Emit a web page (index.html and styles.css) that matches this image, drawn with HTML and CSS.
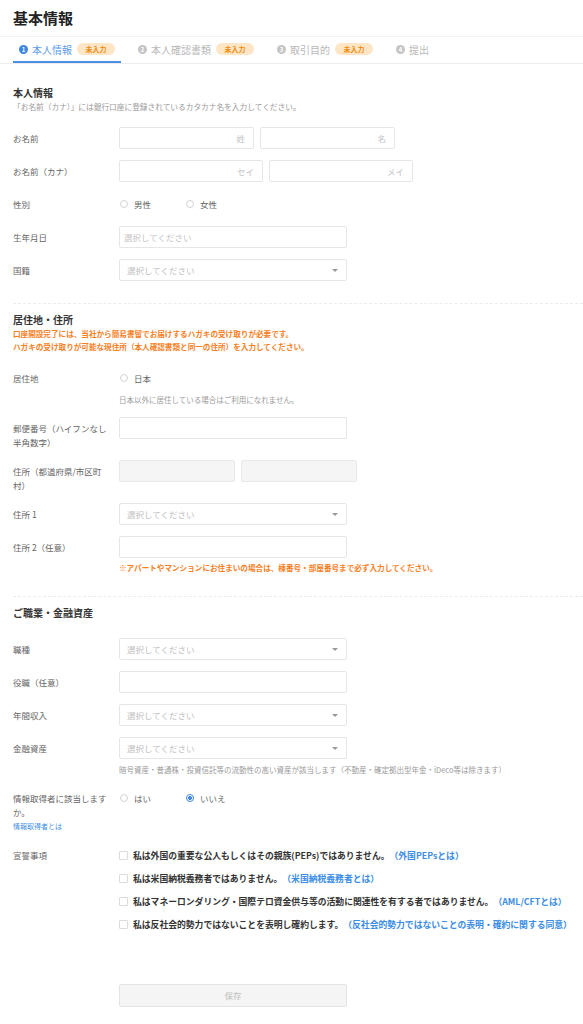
FILE: index.html
```html
<!DOCTYPE html>
<html lang="ja">
<head>
    <meta charset="UTF-8">
    <meta name="viewport" content="width=device-width, initial-scale=1.0">
    <title>基本情報</title>
    <link rel="stylesheet" href="styles.css">
</head>
<body>
    <div class="page">
        <h1 class="page-title">基本情報</h1>

        <div class="steps">
            <div class="step active">
                <span class="step-num">1</span>
                <span class="step-name">本人情報</span>
                <span class="badge">未入力</span>
            </div>
            <div class="step">
                <span class="step-num">2</span>
                <span class="step-name">本人確認書類</span>
                <span class="badge">未入力</span>
            </div>
            <div class="step">
                <span class="step-num">3</span>
                <span class="step-name">取引目的</span>
                <span class="badge">未入力</span>
            </div>
            <div class="step">
                <span class="step-num">4</span>
                <span class="step-name">提出</span>
            </div>
        </div>

        <!-- 本人情報 -->
        <section class="section">
            <div class="section-head">
                <h2>本人情報</h2>
                <p class="section-note">「お名前（カナ）」には銀行口座に登録されているカタカナ名を入力してください。</p>
            </div>

            <div class="form-row">
                <label class="form-label">お名前</label>
                <div class="form-control">
                    <div class="pair">
                        <input type="text" class="input input-name" placeholder="姓">
                        <input type="text" class="input input-name" placeholder="名">
                    </div>
                </div>
            </div>
            <div class="form-row">
                <label class="form-label">お名前（カナ）</label>
                <div class="form-control">
                    <div class="pair">
                        <input type="text" class="input input-kana" placeholder="セイ">
                        <input type="text" class="input input-kana" placeholder="メイ">
                    </div>
                </div>
            </div>
            <div class="form-row">
                <label class="form-label">性別</label>
                <div class="form-control">
                    <div class="radio-group">
                        <span class="radio"><span class="radio-mark"></span>男性</span>
                        <span class="radio"><span class="radio-mark"></span>女性</span>
                    </div>
                </div>
            </div>
            <div class="form-row">
                <label class="form-label">生年月日</label>
                <div class="form-control">
                    <input type="text" class="input input-wide input-date" placeholder="選択してください">
                </div>
            </div>
            <div class="form-row">
                <label class="form-label">国籍</label>
                <div class="form-control">
                    <div class="select">選択してください<span class="caret"></span></div>
                </div>
            </div>
        </section>

        <!-- 居住地・住所 -->
        <section class="section">
            <div class="section-head">
                <h2>居住地・住所</h2>
                <p class="warn">口座開設完了には、当社から簡易書留でお届けするハガキの受け取りが必要です。<br>ハガキの受け取りが可能な現住所（本人確認書類と同一の住所）を入力してください。</p>
            </div>

            <div class="form-row">
                <label class="form-label">居住地</label>
                <div class="form-control">
                    <div class="radio-group">
                        <span class="radio"><span class="radio-mark"></span>日本</span>
                    </div>
                    <p class="hint">日本以外に居住している場合はご利用になれません。</p>
                </div>
            </div>
            <div class="form-row">
                <label class="form-label">郵便番号（ハイフンなし半角数字）</label>
                <div class="form-control">
                    <input type="text" class="input input-wide">
                </div>
            </div>
            <div class="form-row">
                <label class="form-label">住所（都道府県/市区町村）</label>
                <div class="form-control">
                    <div class="pair">
                        <input type="text" class="input input-half" disabled>
                        <input type="text" class="input input-half" disabled>
                    </div>
                </div>
            </div>
            <div class="form-row">
                <label class="form-label">住所 1</label>
                <div class="form-control">
                    <div class="select">選択してください<span class="caret"></span></div>
                </div>
            </div>
            <div class="form-row">
                <label class="form-label">住所 2（任意）</label>
                <div class="form-control">
                    <input type="text" class="input input-wide">
                    <p class="warn warn-field">※アパートやマンションにお住まいの場合は、棟番号・部屋番号まで必ず入力してください。</p>
                </div>
            </div>
        </section>

        <!-- ご職業・金融資産 -->
        <section class="section">
            <div class="section-head section-head-plain">
                <h2>ご職業・金融資産</h2>
            </div>

            <div class="form-row">
                <label class="form-label">職種</label>
                <div class="form-control">
                    <div class="select">選択してください<span class="caret"></span></div>
                </div>
            </div>
            <div class="form-row">
                <label class="form-label">役職（任意）</label>
                <div class="form-control">
                    <input type="text" class="input input-wide">
                </div>
            </div>
            <div class="form-row">
                <label class="form-label">年間収入</label>
                <div class="form-control">
                    <div class="select">選択してください<span class="caret"></span></div>
                </div>
            </div>
            <div class="form-row">
                <label class="form-label">金融資産</label>
                <div class="form-control">
                    <div class="select">選択してください<span class="caret"></span></div>
                    <p class="hint">暗号資産・普通株・投資信託等の流動性の高い資産が該当します（不動産・確定拠出型年金・iDeco等は除きます）</p>
                </div>
            </div>
            <div class="form-row">
                <label class="form-label">情報取得者に該当しますか。<a class="label-link" href="#">情報取得者とは</a></label>
                <div class="form-control">
                    <div class="radio-group">
                        <span class="radio"><span class="radio-mark"></span>はい</span>
                        <span class="radio checked"><span class="radio-mark"></span>いいえ</span>
                    </div>
                </div>
            </div>
            <div class="form-row">
                <label class="form-label">宣誓事項</label>
                <div class="form-control">
                    <div class="check-list">
                        <div class="check"><span class="check-box"></span>私は外国の重要な公人もしくはその親族(PEPs)ではありません。<a href="#">（外国PEPsとは）</a></div>
                        <div class="check"><span class="check-box"></span>私は米国納税義務者ではありません。<a href="#">（米国納税義務者とは）</a></div>
                        <div class="check"><span class="check-box"></span>私はマネーロンダリング・国際テロ資金供与等の活動に関連性を有する者ではありません。<a href="#">（AML/CFTとは）</a></div>
                        <div class="check"><span class="check-box"></span>私は反社会的勢力ではないことを表明し確約します。<a href="#">（反社会的勢力ではないことの表明・確約に関する同意）</a></div>
                    </div>
                </div>
            </div>

            <div class="actions">
                <button class="save" disabled>保存</button>
            </div>
        </section>
    </div>
</body>
</html>
```

FILE: styles.css
```css
body {
    margin: 0;
    background-color: white;
    font-family: "Noto Sans CJK JP", "Noto Sans", sans-serif;
    color: #333;
}

.page {
    padding: 8px 0 0 13px;
}

.page-title {
    margin: 0 0 8px;
    font-size: 15px;
    line-height: 20px;
    font-weight: bold;
    color: #222;
}

/* steps */

.steps {
    display: flex;
    gap: 11px;
    border-top: 1px solid #f2f2f2;
    border-bottom: 1px solid #ececec;
    margin-left: -13px;
    padding-left: 13px;
}

.step {
    display: flex;
    align-items: center;
    height: 24px;
    padding: 0 6px;
    border-bottom: 2px solid transparent;
    font-size: 10px;
    color: #b8b8b8;
}

.step.active {
    border-bottom-color: #4a8fe6;
    color: #5d9ce8;
}

.step-num {
    width: 9px;
    height: 9px;
    border-radius: 50%;
    background-color: #c4c4c4;
    color: white;
    font-size: 6px;
    font-weight: bold;
    line-height: 9px;
    text-align: center;
    margin-right: 4px;
}

.step.active .step-num {
    background-color: #3d86e3;
}

.badge {
    margin-left: 5px;
    padding: 0 8.5px;
    height: 12px;
    line-height: 12px;
    border-radius: 6px;
    background-color: #fde6c6;
    color: #f08a0c;
    font-size: 7px;
    font-weight: bold;
}

/* sections */

.section {
    padding: 9px 0 11px;
    border-top: 1px dashed #ececec;
}

.steps + .section {
    border-top: none;
    padding-top: 22px;
}

.section-head {
    margin-bottom: 14px;
}

.section-head-plain {
    margin-bottom: 18px;
}

h2 {
    margin: 0;
    font-size: 10px;
    line-height: 14px;
    font-weight: bold;
    color: #333;
}

.section-note {
    margin: 1px 0 0;
    font-size: 7.7px;
    line-height: 12px;
    color: #999;
}

.warn {
    margin: 0;
    font-size: 7.6px;
    line-height: 13px;
    font-weight: bold;
    color: #f7801e;
}

.warn-field {
    margin-top: 4px;
    line-height: 12px;
}

/* form rows */

.form-row {
    display: flex;
    margin-bottom: 11px;
}

.form-label {
    width: 96px;
    flex-shrink: 0;
    padding: 4px 10px 0 0;
    font-size: 8.5px;
    line-height: 14px;
    color: #666;
}

.label-link {
    display: block;
    font-size: 7px;
    color: #3b8de6;
    text-decoration: none;
}

.form-control {
    flex: 1;
}

.pair {
    display: flex;
    gap: 6px;
}

.input {
    height: 22px;
    box-sizing: border-box;
    border: 1px solid #e6e6e6;
    border-radius: 2px;
    padding: 0 8px;
    font-family: inherit;
    font-size: 8.5px;
    color: #333;
    background-color: white;
    margin: 0;
}

.input::placeholder {
    color: #c4c4c4;
}

.input-name {
    width: 135px;
    text-align: right;
}

.input-kana {
    width: 144px;
    text-align: right;
}

.input-wide {
    width: 228px;
    display: block;
}

.input-date {
    padding-left: 4px;
}

.input-half {
    width: 116px;
    background-color: #f5f5f5;
    border-color: #e8e8e8;
}

.select {
    position: relative;
    width: 228px;
    height: 22px;
    box-sizing: border-box;
    border: 1px solid #e6e6e6;
    border-radius: 2px;
    padding-left: 7px;
    font-size: 8.5px;
    line-height: 20px;
    color: #c0c0c0;
}

.caret {
    position: absolute;
    right: 8px;
    top: 9px;
    border-left: 3px solid transparent;
    border-right: 3px solid transparent;
    border-top: 3px solid #999;
}

.hint {
    margin: 5px 0 0;
    font-size: 7.5px;
    line-height: 12px;
    color: #9a9a9a;
}

/* radios and checkboxes */

.radio-group {
    display: flex;
    align-items: center;
    height: 22px;
    gap: 34px;
}

.radio {
    display: flex;
    align-items: center;
    font-size: 8.5px;
    color: #666;
}

.radio-mark {
    width: 8px;
    height: 8px;
    box-sizing: border-box;
    border: 1px solid #d4d4d4;
    border-radius: 50%;
    margin: 0 6px 0 1px;
}

.radio.checked .radio-mark {
    border-color: #3d86e3;
    background: radial-gradient(circle, #3d86e3 0 1.7px, white 2.2px);
}

.check-list {
    display: flex;
    flex-direction: column;
    gap: 1px;
}

.check {
    display: flex;
    align-items: center;
    height: 22px;
    font-size: 8.8px;
    font-weight: bold;
    color: #333;
    white-space: nowrap;
}

.check a {
    color: #3b8de6;
    text-decoration: none;
}

.check-box {
    width: 9px;
    height: 9px;
    box-sizing: border-box;
    border: 1px solid #dcdcdc;
    border-radius: 1px;
    margin-right: 5px;
}

.actions {
    padding: 34px 0 8px 106px;
}

.save {
    width: 228px;
    height: 23px;
    border: 1px solid #e4e4e4;
    border-radius: 2px;
    background-color: #f5f5f5;
    color: #bdbdbd;
    font-family: inherit;
    font-size: 8.5px;
}
```
